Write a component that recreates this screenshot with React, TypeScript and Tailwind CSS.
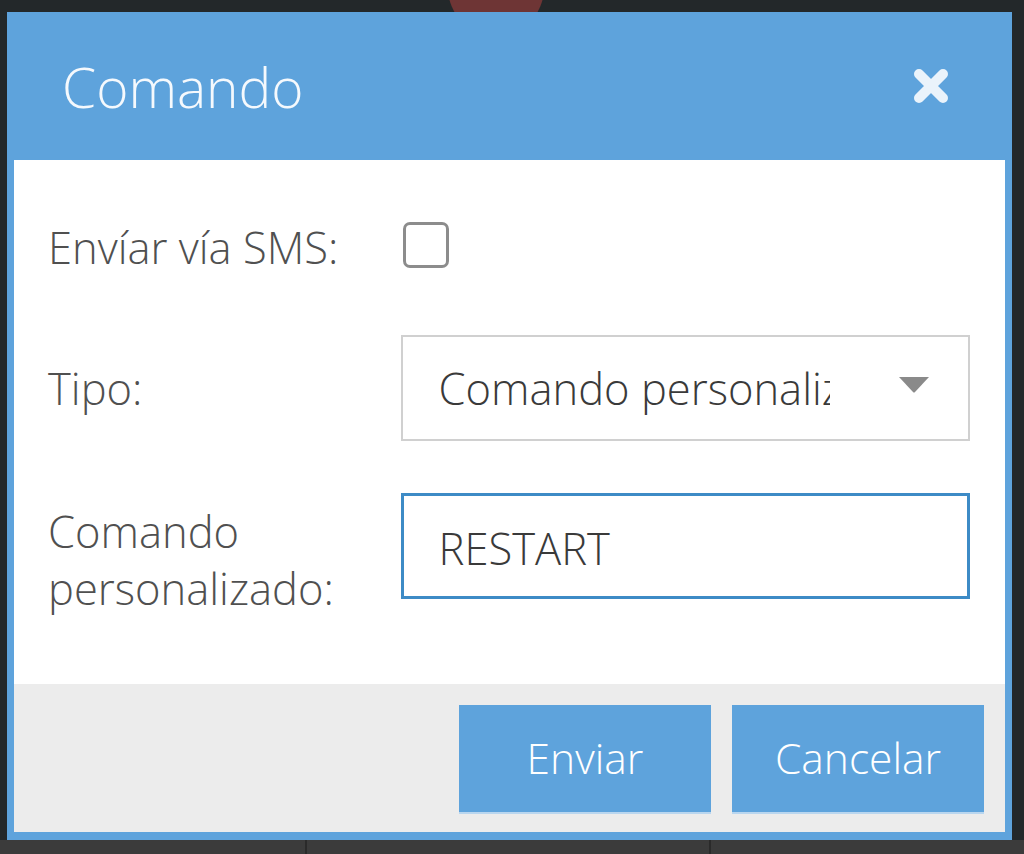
import React from 'react';

const CloseIcon: React.FC = () => (
  <svg width="38" height="38" viewBox="0 0 38 38" fill="none">
    <path
      d="M7 7 L31 31 M31 7 L7 31"
      stroke="#eaf3fb"
      strokeWidth="10"
      strokeLinecap="round"
    />
  </svg>
);

const Caret: React.FC = () => (
  <svg width="32" height="17" viewBox="0 0 32 17" className="shrink-0">
    <path d="M1 1 H31 L17 16 Q16 17 15 16 Z" fill="#8a8a8a" />
  </svg>
);

const App: React.FC = () => {
  return (
    <div className="relative w-[1024px] h-[854px] overflow-hidden bg-[#23282a] pt-[12px] pl-[7px] font-['Open_Sans',sans-serif]">
      {/* map blob peeking above the dialog */}
      <div className="absolute left-[448px] top-[-60px] w-[96px] h-[96px] rounded-full bg-[#6e3535]" />

      <div className="relative w-[1005px] bg-[#5ea3dc]">
        {/* header */}
        <div className="h-[148px] flex items-center justify-between pl-[55px] pr-[62px]">
          <h1 className="text-[55px] leading-none font-light text-[#f5f9fd]">Comando</h1>
          <CloseIcon />
        </div>

        <div className="mx-[7px] pb-[8px]">
          {/* body */}
          <div className="h-[524px] bg-white pl-[34px] pr-[35px] pt-[59px] text-[43.5px] leading-[57px] font-light">
            <div className="flex items-center h-[57px]">
              <span className="w-[353px] text-[#505050]">Envíar vía SMS:</span>
              <span className="w-[46px] h-[46px] rounded-[7px] border-[3px] border-[#8c8c8c] mt-[-6px] ml-[2px]" />
            </div>

            <div className="flex items-center mt-[59px]">
              <span className="w-[353px] text-[#505050]">Tipo:</span>
              <div className="w-[570px] h-[106px] border-2 border-[#d0d0d0] flex items-center pl-[36px] pr-[38px]">
                <span className="w-[391px] overflow-hidden whitespace-nowrap text-[#3a3a3a]">
                  Comando personalizado
                </span>
                <span className="ml-auto mt-[-8px]">
                  <Caret />
                </span>
              </div>
            </div>

            <div className="flex items-start mt-[52px]">
              <span className="w-[353px] pt-[10px] text-[#505050]">
                Comando
                <br />
                personalizado:
              </span>
              <div className="w-[570px] h-[106px] border-[3px] border-[#3d8bc6] flex items-center pl-[35px] pt-[4px] text-[#3a3a3a]">
                RESTART
              </div>
            </div>
          </div>

          {/* footer */}
          <div className="h-[148px] bg-[#ececec] flex items-center justify-end gap-[21px] pr-[21px]">
            <button className="w-[252px] h-[107px] bg-[#5ea3dc] text-white text-[42.5px] font-light shadow-[0_2px_0_#b9d6ef]">
              Enviar
            </button>
            <button className="w-[252px] h-[107px] bg-[#5ea3dc] text-white text-[42.5px] font-light shadow-[0_2px_0_#b9d6ef]">
              Cancelar
            </button>
          </div>
        </div>
      </div>

      {/* map toolbar strip under the dialog */}
      <div className="flex h-[14px] ml-[-7px] bg-[#3b3b3b]">
        <div className="w-[307px] border-r-2 border-[#2a2a2a]" />
        <div className="w-[404px] border-r-2 border-[#2a2a2a]" />
      </div>
    </div>
  );
};

export default App;
